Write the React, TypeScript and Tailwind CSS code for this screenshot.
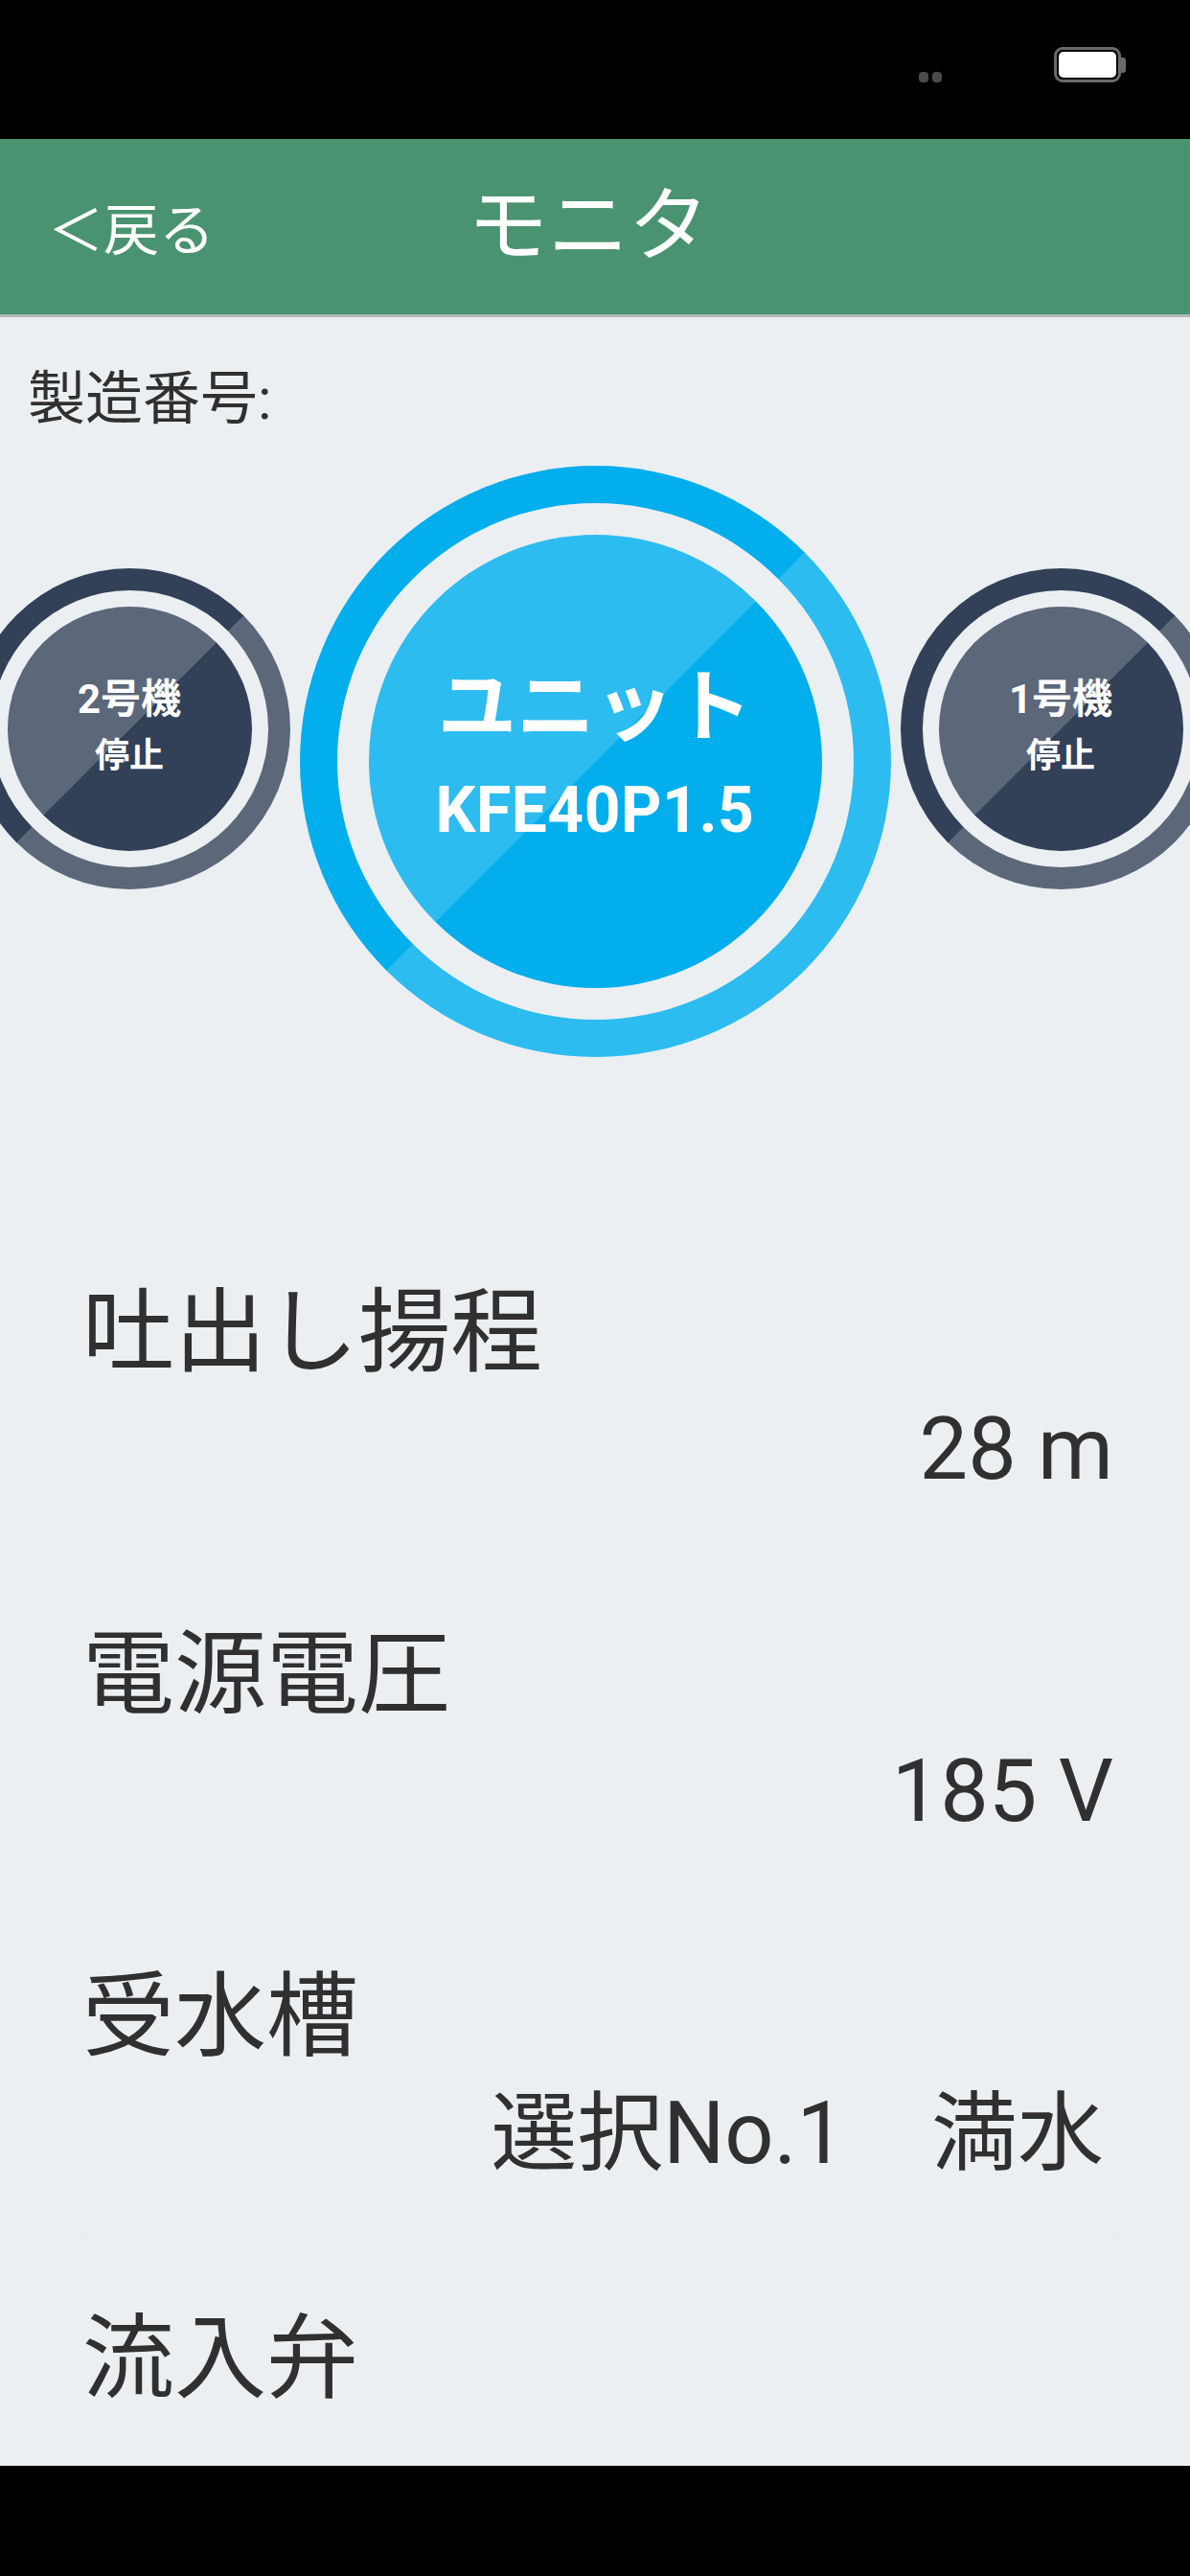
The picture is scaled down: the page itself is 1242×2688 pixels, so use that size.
import React from "react";

function SideCircle({ label }: { label: string }) {
  return (
    <div className="shrink-0 mt-[107px] w-[335px] h-[335px] rounded-full p-[23px] bg-[linear-gradient(135deg,#324058_50%,#5c677a_50%)]">
      <div className="w-full h-full rounded-full p-[17px] bg-[#ebeff2]">
        <div className="w-full h-full rounded-full bg-[linear-gradient(135deg,#5c677a_50%,#324058_50%)] flex flex-col items-center justify-center text-white font-bold">
          <div className="text-[42px] leading-none mt-[-6px]">{label}</div>
          <div className="text-[36px] leading-none mt-[20px]">停止</div>
        </div>
      </div>
    </div>
  );
}

function CenterCircle() {
  return (
    <div className="shrink-0 w-[617px] h-[617px] rounded-full p-[39px] bg-[linear-gradient(135deg,#03aeec_50%,#2dbcef_50%)]">
      <div className="w-full h-full rounded-full p-[33px] bg-[#ebeff2]">
        <div className="w-full h-full rounded-full bg-[linear-gradient(135deg,#2dbcef_50%,#03aeec_50%)] flex flex-col items-center justify-center text-white font-bold">
          <div className="text-[82px] leading-none mt-[-14px]">ユニット</div>
          <div className="text-[66px] leading-none mt-[34px] tracking-[0.5px]">KFE40P1.5</div>
        </div>
      </div>
    </div>
  );
}

function Row({ label, value, valueClass = "" }: { label: string; value?: string; valueClass?: string }) {
  return (
    <div className="shrink-0 ml-[85px] w-[1083px] pt-[75px] pb-[64px] border-b-2 border-[#ebebee]">
      <div className="text-[96px] leading-none pl-[1px] whitespace-nowrap">{label}</div>
      <div className={"text-[90px] leading-none mt-[30px] h-[90px] text-right pr-[6px] whitespace-nowrap " + valueClass}>
        {value ?? ""}
      </div>
    </div>
  );
}

export default function App() {
  return (
    <div className="w-[1242px] h-[2688px] flex flex-col overflow-hidden bg-[#ebeff2] text-[#303030] font-['Roboto','Noto_Sans_CJK_JP',sans-serif]">
      {/* status bar */}
      <div className="h-[145px] shrink-0 bg-black flex justify-end items-start pr-[67px]">
        <div className="flex gap-[4px] mt-[75px]">
          <div className="w-[10px] h-[11px] rounded-[4px] bg-[#4a4a4a]" />
          <div className="w-[10px] h-[11px] rounded-[4px] bg-[#4a4a4a]" />
        </div>
        <div className="flex items-center ml-[117px] mt-[49px]">
          <div className="w-[70px] h-[37px] rounded-[9px] border-[3px] border-[#6a6a6a] bg-black p-[2px]">
            <div className="w-full h-full rounded-[5px] bg-white" />
          </div>
          <div className="w-[5px] h-[16px] rounded-r-[3px] bg-[#6a6a6a]" />
        </div>
      </div>

      {/* header */}
      <div className="h-[183px] shrink-0 bg-[#4a9370] grid grid-cols-[1fr_auto_1fr] items-center text-white">
        <div className="pl-[50px] text-[58px] leading-none whitespace-nowrap mt-[8px]">＜戻る</div>
        <div className="text-[84px] leading-none pr-[14px]">モニタ</div>
        <div />
      </div>
      <div className="h-[3px] shrink-0 bg-[#b3b8b6]" />

      {/* content */}
      <div className="flex-1 flex flex-col overflow-hidden">
        <div className="pt-[56px] pl-[29px] text-[60px] leading-none">製造番号:</div>

        <div className="mt-[39px] flex justify-center items-start gap-[10px]">
          <SideCircle label="2号機" />
          <CenterCircle />
          <SideCircle label="1号機" />
        </div>

        <div className="mt-[164px] flex flex-col">
          <Row label="吐出し揚程" value="28 m" />
          <Row label="電源電圧" value="185 V" />
          <Row label="受水槽" value="選択No.1　満水" valueClass="pr-[16px]" />
          <Row label="流入弁" />
        </div>
      </div>

      {/* nav bar */}
      <div className="h-[115px] shrink-0 bg-black" />
    </div>
  );
}
